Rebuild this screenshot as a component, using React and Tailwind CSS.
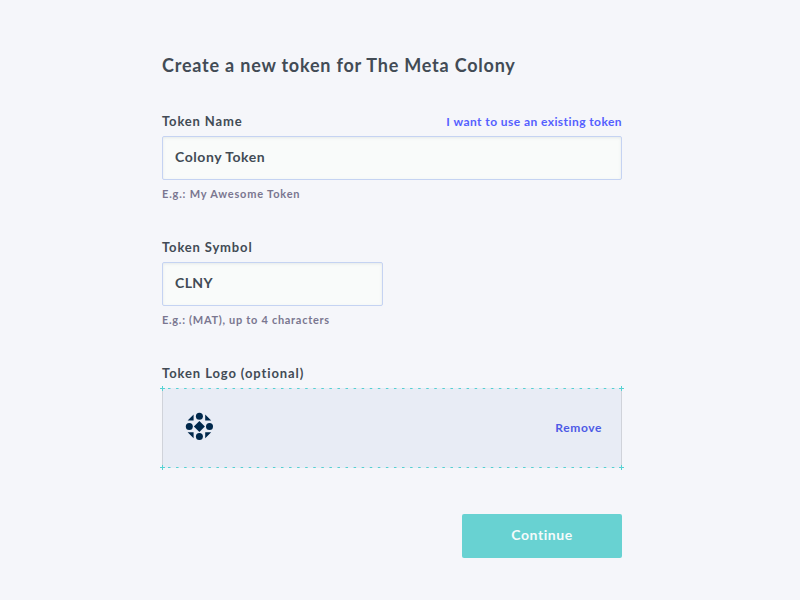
const Cross = ({ className }) => (
  <svg className={`absolute ${className}`} width="5" height="5" viewBox="0 0 5 5" shapeRendering="crispEdges">
    <path d="M2 0h1v5H2zM0 2h5v1H0z" fill="#55d3d3" />
  </svg>
);

const DashedLine = ({ className }) => (
  <svg className={`absolute left-0 ${className}`} width="460" height="1">
    <line x1="6" y1="0.5" x2="456" y2="0.5" stroke="#55d0d2" strokeDasharray="2.5 5.57" />
  </svg>
);

const ColonyLogo = () => (
  <svg width="28" height="28" viewBox="0 0 28 28" className="overflow-visible" fill="#00284b">
    <circle cx="14.4" cy="4.3" r="3.5" />
    <circle cx="14.4" cy="24.4" r="3.5" />
    <circle cx="4.3" cy="14.4" r="3.5" />
    <circle cx="24.5" cy="14.4" r="3.5" />
    <path d="M14.4 8.9 19.9 14.4 14.4 19.9 8.9 14.4z" />
    <path d="M8.6 2.6v6H2.6zM20.2 2.6v6h6zM8.6 26.2v-6H2.6zM20.2 26.2v-6h6z" />
  </svg>
);

const Input = ({ value, className }) => (
  <input
    readOnly
    value={value}
    className={`mt-[5px] block h-11 rounded-[2px] border border-[#c5d3f2] bg-[#f9fbfa] px-3 pb-[3px] text-[14px] font-bold shadow-[inset_0_1px_3px_rgba(62,76,92,0.10)] outline-none ${className}`}
  />
);

export default function App() {
  return (
    <main className="h-[600px] w-[800px] overflow-hidden bg-[#f5f6fa] pl-[162px] pt-[53px] font-['Lato',sans-serif] font-bold text-[#424b55]">
      <div className="w-[460px]">
        <h1 className="h-6 whitespace-nowrap text-[18px] leading-6 tracking-[0.79px]">Create a new token for The Meta Colony</h1>

        <section className="mt-[34px] h-[126px]">
          <div className="flex h-5 items-center justify-between whitespace-nowrap">
            <label className="text-[13px] leading-5 tracking-[0.84px]">Token Name</label>
            <a className="pt-[2px] text-[12px] leading-5 tracking-[0.43px] text-[#5460ff]">I want to use an existing token</a>
          </div>
          <Input value="Colony Token" className="w-full tracking-[0.55px]" />
          <p className="mt-[6px] text-[11px] leading-4 tracking-[0.8px] text-[#7a7690]">E.g.: My Awesome Token</p>
        </section>

        <section className="h-[126px]">
          <label className="block h-5 text-[13px] leading-5 tracking-[0.84px]">Token Symbol</label>
          <Input value="CLNY" className="w-[221px] tracking-[0.4px]" />
          <p className="mt-[6px] text-[11px] leading-4 tracking-[0.7px] text-[#7a7690]">E.g.: (MAT), up to 4 characters</p>
        </section>

        <section>
          <label className="block h-5 text-[13px] leading-5 tracking-[0.9px]">Token Logo (optional)</label>
          <div className="relative mt-[5px] flex h-20 items-center justify-between border-x border-[#d0d3da] bg-[#e8ecf5] pl-[22px] pr-[19px]">
            <DashedLine className="top-0 -ml-px" />
            <DashedLine className="bottom-0 -ml-px" />
            <Cross className="-left-[3px] -top-[2px]" />
            <Cross className="-right-[3px] -top-[2px]" />
            <Cross className="-left-[3px] -bottom-[2px]" />
            <Cross className="-right-[3px] -bottom-[2px]" />
            <div className="pb-[4px]"><ColonyLogo /></div>
            <button className="text-[12px] tracking-[0.6px] text-[#4d5ae6]">Remove</button>
          </div>
        </section>

        <button className="ml-auto mt-[46px] block h-11 w-40 rounded-[2px] bg-[#68d2d2] pb-[3px] text-[14px] tracking-[0.55px] text-[#f5fbfb]">Continue</button>
      </div>
    </main>
  );
}
